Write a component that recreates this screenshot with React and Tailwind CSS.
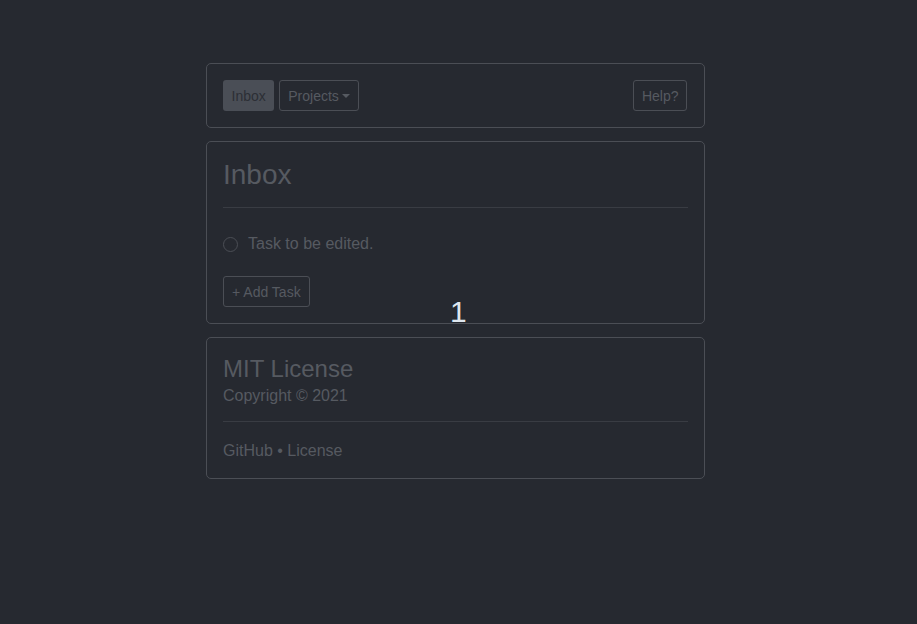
export default function App() {
  return (
    <div
      className="min-h-screen bg-[#262930] pt-[63px] pl-[206px] text-[#565a61]"
      style={{ fontFamily: '"Liberation Sans", Arial, sans-serif' }}
    >
      <div className="w-[499px] flex flex-col gap-[13px]">
        {/* Nav */}
        <div className="border border-[#4b4e55] rounded-[5px] px-4 py-4 flex items-center">
          <button className="h-[31px] px-[8.5px] rounded-[3px] bg-[#4a4e56] text-[#2c2f35] text-[14px] leading-none">
            Inbox
          </button>
          <button className="ml-[5px] h-[31px] px-[8px] rounded-[3px] border border-[#4b4e55] text-[14px] leading-none flex items-center gap-[3px]">
            Projects
            <span className="w-0 h-0 border-x-[4px] border-x-transparent border-t-[4px] border-t-[#565a61]" />
          </button>
          <button className="ml-auto mr-px h-[31px] px-[7.5px] rounded-[3px] border border-[#4b4e55] text-[14px] leading-none">
            Help?
          </button>
        </div>

        {/* Inbox card */}
        <div className="relative border border-[#4b4e55] rounded-[5px] px-4 pt-[16px] pb-[16px]">
          <h1 className="text-[28px] leading-[34px] pb-[15px] border-b border-[#393c43]">Inbox</h1>
          <div className="flex items-center mt-[26px] h-[20px]">
            <span className="w-[15px] h-[15px] rounded-full border border-[#4b4e55]" />
            <span className="ml-[10px] text-[16px]">Task to be edited.</span>
          </div>
          <button className="mt-[22px] h-[31px] px-[8px] rounded-[3px] border border-[#4b4e55] text-[14px] leading-none">
            + Add Task
          </button>
          <span className="absolute left-[243px] bottom-[-4px] text-[30px] leading-none text-[#dfe6ee]">1</span>
        </div>

        {/* Footer card */}
        <div className="border border-[#4b4e55] rounded-[5px] px-4 pt-[17px] pb-[17px]">
          <h2 className="text-[24px] leading-[28px]">MIT License</h2>
          <p className="mt-[3px] text-[16px] leading-[20px]">Copyright © 2021</p>
          <div className="mt-[15px] border-b border-[#393c43]" />
          <p className="mt-[19px] text-[16px] leading-[20px]">GitHub • License</p>
        </div>
      </div>
    </div>
  );
}
